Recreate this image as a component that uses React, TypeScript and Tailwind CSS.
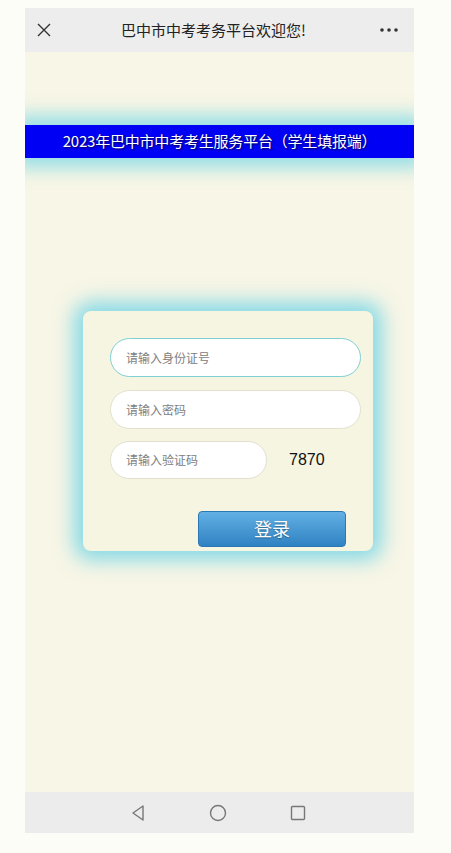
import React from "react";

export default function App() {
  const font = { fontFamily: '"Noto Sans CJK SC", "Liberation Sans", sans-serif' };
  return (
    <div className="w-[451px] h-[853px] bg-[#fdfdf8] pt-[8px] pl-[25px]" style={font}>
      <div className="w-[389px] h-[825px] flex flex-col">
        <div className="h-[44px] bg-[#ededed] flex items-center justify-between px-[12px] shrink-0">
          <svg width="16" height="16" viewBox="0 0 16 16" className="ml-[-1px]">
            <path d="M2 2 L14 14 M14 2 L2 14" stroke="#333" strokeWidth="1.4" />
          </svg>
          <div className="text-[15px] text-[#222] mr-[4px]">巴中市中考考务平台欢迎您!</div>
          <svg width="20" height="6" viewBox="0 0 20 6" className="mr-[3px]">
            <circle cx="3" cy="3" r="1.8" fill="#333" />
            <circle cx="10" cy="3" r="1.8" fill="#333" />
            <circle cx="17" cy="3" r="1.8" fill="#333" />
          </svg>
        </div>
        <div className="flex-1 bg-[#f8f6e6] flex flex-col overflow-hidden">
          <div className="mt-[73px] h-[33px] bg-[#0000f4] flex items-center justify-center text-white text-[15px] shadow-[0_0_18px_10px_rgba(120,215,230,0.75)] [text-shadow:1px_1px_2px_rgba(0,0,0,0.7)] shrink-0">
            <span className="tracking-[-0.2px]">2023年巴中市中考考生服务平台（学生填报端）</span>
          </div>
          <div className="mt-[153px] ml-[58px] w-[290px] h-[240px] rounded-[8px] bg-[#f6f5e2] shadow-[0_0_20px_9px_rgba(105,210,230,0.8)] pt-[27px] pl-[27px] pr-[12px] flex flex-col">
            <div className="h-[39px] w-[251px] rounded-full bg-white border border-[#7fcfd3] flex items-center pl-[15px] text-[12px] text-[#808080]">
              请输入身份证号
            </div>
            <div className="mt-[13px] h-[39px] w-[251px] rounded-full bg-white border border-[#e3e0d0] flex items-center pl-[15px] text-[12px] text-[#808080]">
              请输入密码
            </div>
            <div className="mt-[12px] flex items-center">
              <div className="h-[38px] w-[157px] rounded-full bg-white border border-[#e3e0d0] flex items-center pl-[15px] text-[12px] text-[#808080]">
                请输入验证码
              </div>
              <div className="ml-[22px] text-[16px] text-[#111]" style={{ fontFamily: '"Liberation Sans", sans-serif' }}>7870</div>
            </div>
            <div className="mt-[32px] ml-[88px] w-[148px] h-[36px] rounded-[4px] bg-gradient-to-b from-[#62b0e4] to-[#2f82c2] border border-[#2a78b4] flex items-center justify-center text-white text-[18px] pb-[2px] [text-shadow:0_1px_1px_rgba(0,0,0,0.3)]">
              登录
            </div>
          </div>
        </div>
        <div className="h-[41px] bg-[#ececec] flex items-center justify-center shrink-0">
          <div className="flex items-center gap-[63px] ml-[-3px]">
            <svg width="16" height="18" viewBox="0 0 16 18">
              <path d="M13 2 L3 9 L13 16 Z" fill="none" stroke="#777" strokeWidth="1.4" strokeLinejoin="round" />
            </svg>
            <svg width="18" height="18" viewBox="0 0 18 18">
              <circle cx="9" cy="9" r="7.5" fill="none" stroke="#777" strokeWidth="1.4" />
            </svg>
            <svg width="16" height="16" viewBox="0 0 16 16">
              <rect x="1.5" y="1.5" width="13" height="13" rx="1" fill="none" stroke="#777" strokeWidth="1.4" />
            </svg>
          </div>
        </div>
      </div>
    </div>
  );
}
